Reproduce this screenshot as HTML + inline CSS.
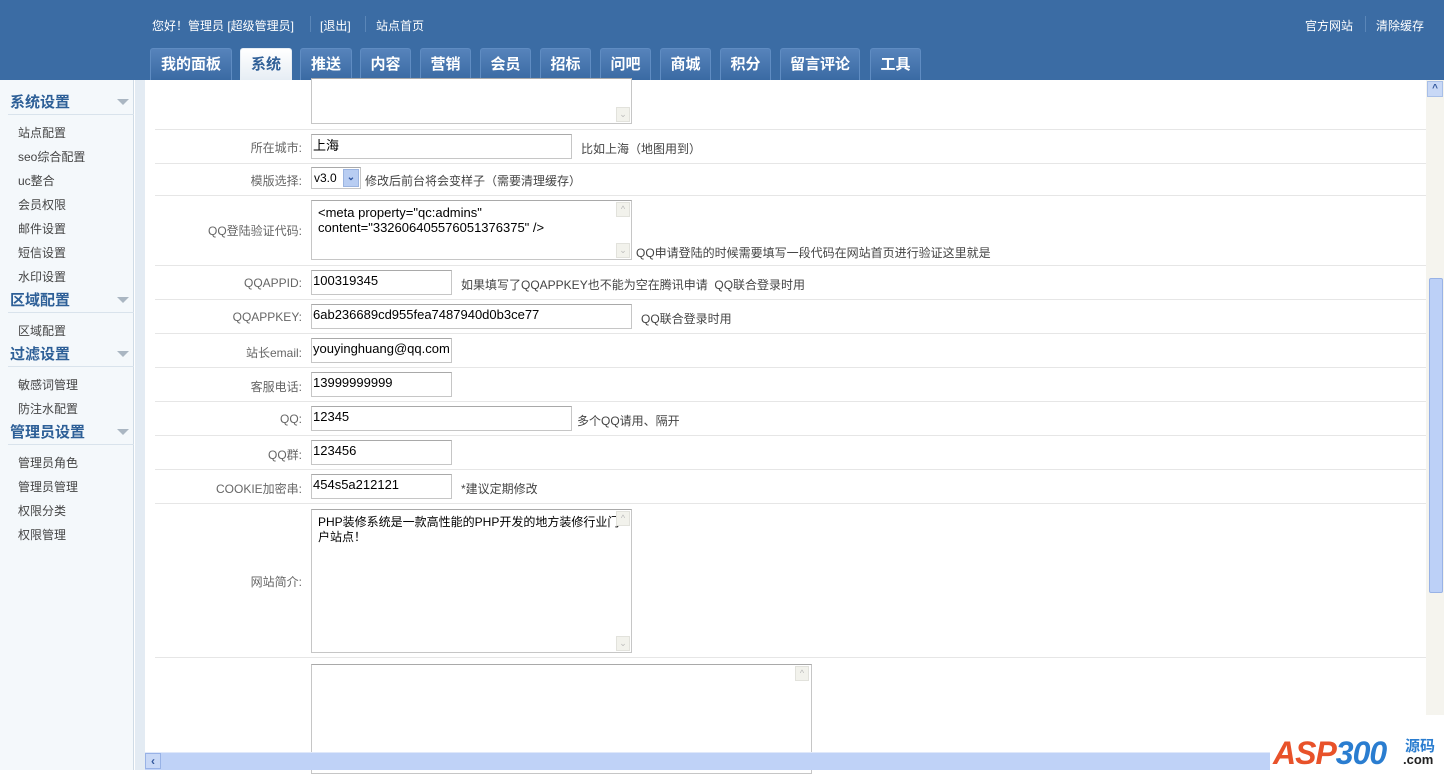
<!DOCTYPE html>
<html><head><meta charset="utf-8"><style>
*{margin:0;padding:0;box-sizing:border-box}
body{width:1444px;height:770px;overflow:hidden;position:relative;background:#fff;font-family:"Liberation Sans","Noto Sans CJK SC",sans-serif;font-size:12px;color:#555}
.a{position:absolute}
#hd{left:0;top:0;width:1444px;height:80px;background:#3b6ca4}
.ht{color:#fff;font-size:12px;top:17px}
.sep{top:16px;width:1px;height:16px;background:#5a86b8}
.tab{top:48px;height:32px;background:linear-gradient(#5683bb,#3a6aa3);border:1px solid #5f8cc2;border-bottom:none;border-radius:3px 3px 0 0;color:#fff;font-weight:bold;font-size:15px;text-align:center;line-height:31px}
.tab.on{background:linear-gradient(#fff,#e6edf4);color:#2f5f97;border-color:#e6edf4}
#sb{left:0;top:80px;width:134px;height:690px;background:#f4f8fb;border-right:1px solid #cfdbe6}
#gap{left:135px;top:80px;width:10px;height:690px;background:#e3ebf3}
.sh{left:10px;font-size:15px;font-weight:bold;color:#2d5f97}
.sl{left:8px;width:126px;height:1px;background:#d9e3ec}
.tri{left:117px;width:0;height:0;border-left:6px solid transparent;border-right:6px solid transparent;border-top:6px solid #aab6c2}
.si{left:18px;font-size:12px;color:#444}
.ln{left:155px;width:1271px;height:1px;background:#e6e6e6}
.lb{right:1142px;font-size:12px;color:#666;text-align:right;white-space:nowrap}
.in{border:1px solid #c6c6c6;border-top-color:#a9a9a9;background:#fff;font-size:13px;color:#000;padding:2px 1px;white-space:nowrap;overflow:hidden;font-family:"Liberation Sans","Noto Sans CJK SC",sans-serif}
.tip{font-size:12px;color:#444;white-space:nowrap}
.vs{width:15px;background:#f7f7f3;border-left:1px solid #ececec}
.ar{width:14px;height:15px;background:#f2f2ec;border:1px solid #e2e2dc;color:#bbb;font-size:9px;text-align:center;line-height:13px}
</style></head><body>
<div id="hd" class="a"></div>
<div class="a ht" style="left:152px">您好！管理员 [超级管理员]</div>
<div class="a sep" style="left:310px"></div>
<div class="a ht" style="left:320px">[退出]</div>
<div class="a sep" style="left:365px"></div>
<div class="a ht" style="left:376px">站点首页</div>
<div class="a ht" style="left:1305px">官方网站</div>
<div class="a sep" style="left:1365px"></div>
<div class="a ht" style="left:1376px">清除缓存</div>
<div class="a tab" style="left:150px;width:82px">我的面板</div>
<div class="a tab on" style="left:240px;width:52px">系统</div>
<div class="a tab" style="left:300px;width:52px">推送</div>
<div class="a tab" style="left:360px;width:51px">内容</div>
<div class="a tab" style="left:420px;width:51px">营销</div>
<div class="a tab" style="left:480px;width:51px">会员</div>
<div class="a tab" style="left:540px;width:51px">招标</div>
<div class="a tab" style="left:600px;width:51px">问吧</div>
<div class="a tab" style="left:660px;width:51px">商城</div>
<div class="a tab" style="left:720px;width:51px">积分</div>
<div class="a tab" style="left:780px;width:80px">留言评论</div>
<div class="a tab" style="left:870px;width:51px">工具</div>

<div id="sb" class="a"></div><div id="gap" class="a"></div>
<div class="a sh" style="top:91px">系统设置</div><div class="a tri" style="top:99px"></div><div class="a sl" style="top:114px"></div>
<div class="a si" style="top:124px">站点配置</div>
<div class="a si" style="top:148px">seo综合配置</div>
<div class="a si" style="top:172px">uc整合</div>
<div class="a si" style="top:196px">会员权限</div>
<div class="a si" style="top:220px">邮件设置</div>
<div class="a si" style="top:244px">短信设置</div>
<div class="a si" style="top:268px">水印设置</div>
<div class="a sh" style="top:289px">区域配置</div><div class="a tri" style="top:297px"></div><div class="a sl" style="top:312px"></div>
<div class="a si" style="top:322px">区域配置</div>
<div class="a sh" style="top:343px">过滤设置</div><div class="a tri" style="top:351px"></div><div class="a sl" style="top:366px"></div>
<div class="a si" style="top:376px">敏感词管理</div>
<div class="a si" style="top:400px">防注水配置</div>
<div class="a sh" style="top:421px">管理员设置</div><div class="a tri" style="top:429px"></div><div class="a sl" style="top:444px"></div>
<div class="a si" style="top:454px">管理员角色</div>
<div class="a si" style="top:478px">管理员管理</div>
<div class="a si" style="top:502px">权限分类</div>
<div class="a si" style="top:526px">权限管理</div>

<!-- rows -->
<div class="a in" style="left:311px;top:78px;width:321px;height:46px"></div>
<div class="a ar" style="left:616px;top:107px">&#8964;</div>
<div class="a ln" style="top:129px"></div>
<div class="a lb" style="top:139px">所在城市:</div>
<div class="a in" style="left:311px;top:134px;width:261px;height:25px;padding:0 1px">上海</div>
<div class="a tip" style="left:581px;top:140px">比如上海（地图用到）</div>
<div class="a ln" style="top:163px"></div>
<div class="a lb" style="top:172px">模版选择:</div>
<div class="a in" style="left:311px;top:167px;width:50px;height:22px;padding:3px 2px;font-size:12px">v3.0</div>
<div class="a" style="left:343px;top:169px;width:16px;height:18px;background:#b8cdf2;border:1px solid #9bb4e0;color:#2d55a0;font-size:10px;text-align:center;line-height:16px;font-weight:bold">&#8964;</div>
<div class="a tip" style="left:365px;top:172px">修改后前台将会变样子（需要清理缓存）</div>
<div class="a ln" style="top:195px"></div>
<div class="a lb" style="top:222px">QQ登陆验证代码:</div>
<div class="a in" style="left:311px;top:200px;width:321px;height:60px;padding:4px 6px;line-height:15px">&lt;meta property="qc:admins"<br>content="332606405576051376375" /&gt;</div>
<div class="a ar" style="left:616px;top:202px">^</div><div class="a ar" style="left:616px;top:243px">&#8964;</div>
<div class="a tip" style="left:636px;top:244px">QQ申请登陆的时候需要填写一段代码在网站首页进行验证这里就是</div>
<div class="a ln" style="top:265px"></div>
<div class="a lb" style="top:276px">QQAPPID:</div>
<div class="a in" style="left:311px;top:270px;width:141px;height:25px">100319345</div>
<div class="a tip" style="left:461px;top:276px">如果填写了QQAPPKEY也不能为空在腾讯申请&nbsp; QQ联合登录时用</div>
<div class="a ln" style="top:299px"></div>
<div class="a lb" style="top:310px">QQAPPKEY:</div>
<div class="a in" style="left:311px;top:304px;width:321px;height:25px">6ab236689cd955fea7487940d0b3ce77</div>
<div class="a tip" style="left:641px;top:310px">QQ联合登录时用</div>
<div class="a ln" style="top:333px"></div>
<div class="a lb" style="top:344px">站长email:</div>
<div class="a in" style="left:311px;top:338px;width:141px;height:25px">youyinghuang@qq.com</div>
<div class="a ln" style="top:367px"></div>
<div class="a lb" style="top:378px">客服电话:</div>
<div class="a in" style="left:311px;top:372px;width:141px;height:25px">13999999999</div>
<div class="a ln" style="top:401px"></div>
<div class="a lb" style="top:412px">QQ:</div>
<div class="a in" style="left:311px;top:406px;width:261px;height:25px">12345</div>
<div class="a tip" style="left:577px;top:412px">多个QQ请用、隔开</div>
<div class="a ln" style="top:435px"></div>
<div class="a lb" style="top:446px">QQ群:</div>
<div class="a in" style="left:311px;top:440px;width:141px;height:25px">123456</div>
<div class="a ln" style="top:469px"></div>
<div class="a lb" style="top:480px">COOKIE加密串:</div>
<div class="a in" style="left:311px;top:474px;width:141px;height:25px">454s5a212121</div>
<div class="a tip" style="left:461px;top:480px">*建议定期修改</div>
<div class="a ln" style="top:503px"></div>
<div class="a lb" style="top:573px">网站简介:</div>
<div class="a in" style="left:311px;top:509px;width:321px;height:144px;padding:5px 6px;font-size:12px;line-height:15px;white-space:normal">PHP装修系统是一款高性能的PHP开发的地方装修行业门户站点！</div>
<div class="a ar" style="left:616px;top:511px">^</div><div class="a ar" style="left:616px;top:636px">&#8964;</div>
<div class="a ln" style="top:657px"></div>
<div class="a in" style="left:311px;top:664px;width:501px;height:110px"></div>
<div class="a ar" style="left:795px;top:666px">^</div>

<!-- scrollbars -->
<div class="a" style="left:1426px;top:80px;width:18px;height:674px;background:#f5f4ee"></div>
<div class="a" style="left:1427px;top:81px;width:16px;height:16px;background:#c8d8f6;border:1px solid #a8bfe8;color:#34589c;font-size:10px;text-align:center;line-height:14px;font-weight:bold">^</div>
<div class="a" style="left:1429px;top:278px;width:14px;height:315px;background:#bcd0f7;border:1px solid #98b2e6;border-radius:2px"></div>
<div class="a" style="left:145px;top:752px;width:1299px;height:18px;background:#bfd2f7;border-top:1px solid #dfe8fa"></div>
<div class="a" style="left:145px;top:753px;width:16px;height:16px;background:#c8d8f6;border:1px solid #98b2e6;color:#34589c;font-size:12px;text-align:center;line-height:14px;font-weight:bold">&lsaquo;</div>
<!-- logo -->
<div class="a" style="left:1270px;top:715px;width:174px;height:55px;background:#fff"></div>
<div class="a" style="left:1273px;top:735px;font-size:32px;font-weight:bold;font-style:italic;color:#e8522a;letter-spacing:-1px;font-family:'Liberation Sans',sans-serif">ASP<span style="color:#2a7dd0">300</span></div>
<div class="a" style="left:1405px;top:735px;font-size:15px;font-weight:bold;color:#2a7dd0">源码</div>
<div class="a" style="left:1403px;top:752px;font-size:13px;font-weight:bold;color:#222">.com</div>
</body></html>
